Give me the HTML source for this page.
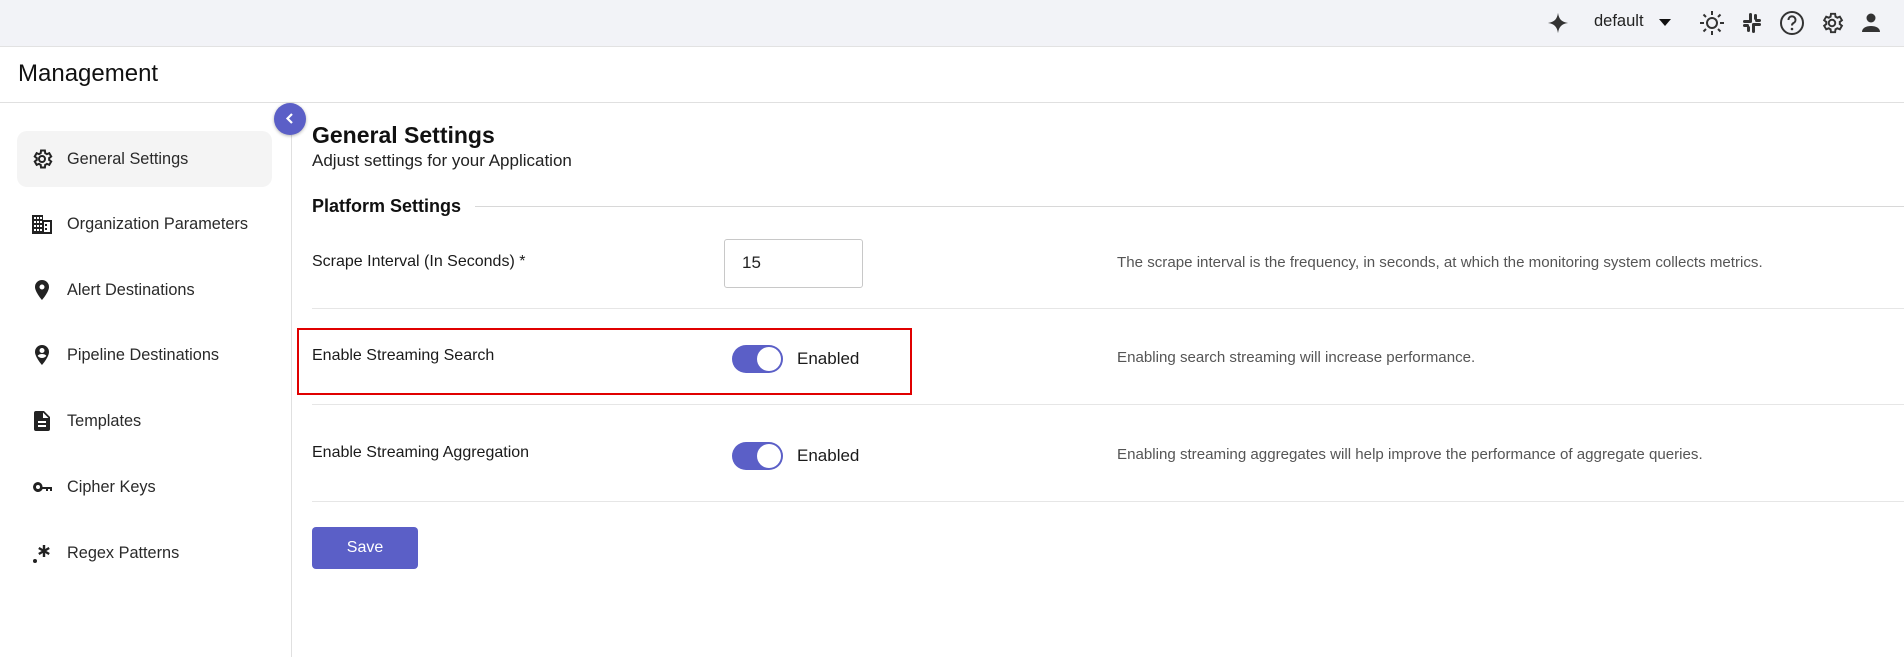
<!DOCTYPE html>
<html><head><meta charset="utf-8"><style>
*{margin:0;padding:0;box-sizing:border-box}
body{width:1904px;height:657px;overflow:hidden;background:#fff;font-family:"Liberation Sans",sans-serif;color:#1a1a1a;position:relative}
.abs{position:absolute;white-space:nowrap}
.top{left:0;top:0;width:1904px;height:47px;background:#f2f3f7;border-bottom:1px solid #e2e2e2}
.hdr{left:0;top:47px;width:1904px;height:56px;border-bottom:1px solid #e0e0e0}
.side{left:291px;top:103px;width:1px;height:554px;background:#e0e0e0}
.item{left:17px;width:255px;height:56px;border-radius:10px;font-size:16.3px;color:#2a2a2a}
.item svg{position:absolute;left:13px;top:16px}
.item span{position:absolute;left:50px;top:19px}
.lbl{font-size:16px;color:#1a1a1a}
.desc{font-size:15.1px;color:#555;left:1117px}
.sep{left:312px;width:1592px;height:1px;background:#e6e6e6}
.tog{width:51px;height:28px;border-radius:14px;background:#5b5fc7}
.tog::after{content:"";position:absolute;right:2px;top:2px;width:24px;height:24px;border-radius:50%;background:#fff}
</style></head><body>
<div class="abs top"></div>
<svg class="abs" style="left:1547px;top:12px" width="22" height="22" viewBox="0 0 24 24"><path d="M12 1 C13 8 16 11 23 12 C16 13 13 16 12 23 C11 16 8 13 1 12 C8 11 11 8 12 1Z" fill="#333"/></svg>
<div class="abs" style="left:1594px;top:12px;font-size:16.5px;color:#222">default</div>
<svg class="abs" style="left:1659px;top:19px" width="12" height="8"><path d="M0 0H12L6 7Z" fill="#111"/></svg>
<svg class="abs" style="left:1699px;top:10px" width="26" height="26" viewBox="0 0 26 26" stroke="#333" stroke-width="2" fill="none"><circle cx="13" cy="13" r="5"/><path d="M13 1v4M13 21v4M1 13h4M21 13h4M4.5 4.5l2.5 2.5M19 19l2.5 2.5M4.5 21.5l2.5-2.5M19 7l2.5-2.5"/></svg>
<svg class="abs" style="left:1740px;top:11px" width="24" height="24" viewBox="0 0 24 24" fill="#333"><rect x="3" y="9" width="9" height="3" rx="1.5"/><rect x="9" y="2" width="3" height="9" rx="1.5"/><rect x="12" y="12" width="9" height="3" rx="1.5"/><rect x="12" y="13" width="3" height="9" rx="1.5"/><rect x="14" y="3" width="3" height="6" rx="1.5"/><rect x="15" y="8" width="6" height="3" rx="1.5"/><rect x="3" y="13" width="6" height="3" rx="1.5"/><rect x="7" y="15" width="3" height="6" rx="1.5"/></svg>
<svg class="abs" style="left:1779px;top:10px" width="26" height="26" viewBox="0 0 26 26"><circle cx="13" cy="13" r="11" stroke="#333" stroke-width="2" fill="none"/><path d="M9.5 10a3.5 3.5 0 1 1 5 3c-1.2.7-1.5 1.3-1.5 2.5" stroke="#333" stroke-width="2" fill="none"/><circle cx="13" cy="19" r="1.3" fill="#333"/></svg>
<svg class="abs" style="left:1819px;top:10px" width="26" height="26" viewBox="0 0 24 24"><path d="M19.14 12.94a7.1 7.1 0 0 0 0-1.88l2.03-1.58-1.92-3.32-2.39.96a7 7 0 0 0-1.62-.94L14.88 3.5h-3.84l-.36 2.68c-.58.24-1.12.56-1.62.94l-2.39-.96-1.92 3.32 2.03 1.58a7.1 7.1 0 0 0 0 1.88l-2.03 1.58 1.92 3.32 2.39-.96c.5.38 1.04.7 1.62.94l.36 2.68h3.840l.36-2.68c.58-.24 1.12-.56 1.62-.94l2.39.96 1.92-3.32z" fill="none" stroke="#333" stroke-width="1.8"/><circle cx="12" cy="12" r="3" fill="none" stroke="#333" stroke-width="1.8"/></svg>
<svg class="abs" style="left:1859px;top:11px" width="24" height="24" viewBox="0 0 24 24" fill="#333"><circle cx="12" cy="7" r="4.5"/><path d="M3 21c0-4 4-6 9-6s9 2 9 6z"/></svg>

<div class="abs hdr"></div>
<div class="abs" style="left:18px;top:60px;font-size:24px;color:#111">Management</div>
<div class="abs side"></div>

<div class="abs item" style="top:131px;background:#f4f4f4"><svg width="24" height="24" viewBox="0 0 24 24"><path d="M19.14 12.94a7.1 7.1 0 0 0 0-1.88l2.03-1.58-1.92-3.32-2.39.96a7 7 0 0 0-1.62-.94L14.88 3.5h-3.84l-.36 2.68c-.58.24-1.12.56-1.62.94l-2.39-.96-1.92 3.32 2.03 1.58a7.1 7.1 0 0 0 0 1.88l-2.03 1.58 1.92 3.32 2.39-.96c.5.38 1.04.7 1.62.94l.36 2.68h3.84l.36-2.68c.58-.24 1.12-.56 1.62-.94l2.39.96 1.92-3.32z" fill="none" stroke="#222" stroke-width="2"/><circle cx="12" cy="12" r="3" fill="none" stroke="#222" stroke-width="2"/></svg><span>General Settings</span></div>
<div class="abs item" style="top:196px"><svg width="24" height="24" viewBox="0 0 24 24" fill="#222"><path d="M2 3h11v5h9v14H2z M4 5v2h2V5zm3 0v2h2V5zm3 0v2h2V5zM4 9v2h2V9zm3 0v2h2V9zm3 0v2h2V9zM4 13v2h2v-2zm3 0v2h2v-2zm3 0v2h2v-2zM4 17v2h2v-2zm3 0v2h2v-2zm3 0v2h2v-2zm4-7v10h6V10zm1 2h2v2h-2zm0 4h2v2h-2z" fill-rule="evenodd"/></svg><span>Organization Parameters</span></div>
<div class="abs item" style="top:262px"><svg width="24" height="24" viewBox="0 0 24 24" fill="#222"><path d="M12 2a7 7 0 0 0-7 7c0 5 7 13 7 13s7-8 7-13a7 7 0 0 0-7-7zm0 9.5a2.5 2.5 0 1 1 0-5 2.5 2.5 0 0 1 0 5z"/></svg><span>Alert Destinations</span></div>
<div class="abs item" style="top:327px"><svg width="24" height="24" viewBox="0 0 24 24" fill="#222"><path d="M12 2a7 7 0 0 0-7 7c0 5 7 13 7 13s7-8 7-13a7 7 0 0 0-7-7zm0 3a2.5 2.5 0 1 1 0 5 2.5 2.5 0 0 1 0-5zm0 10c-1.8 0-3.4-.9-4.3-2.3C8.5 11.6 10.3 11 12 11s3.5.6 4.3 1.7C15.4 14.1 13.8 15 12 15z"/></svg><span>Pipeline Destinations</span></div>
<div class="abs item" style="top:393px"><svg width="24" height="24" viewBox="0 0 24 24" fill="#222"><path d="M6 2h8l6 6v12a2 2 0 0 1-2 2H6a2 2 0 0 1-2-2V4a2 2 0 0 1 2-2zm7 1.5V9h5.5zM8 12v2h8v-2zm0 4v2h8v-2z" fill-rule="evenodd"/></svg><span>Templates</span></div>
<div class="abs item" style="top:459px"><svg width="26" height="24" viewBox="0 0 24 24" fill="#222"><path d="M7 7a5 5 0 1 0 4.6 7H15v2h2v-2h2v2h2v-4h-9.4A5 5 0 0 0 7 7zm0 3a2 2 0 1 1 0 4 2 2 0 0 1 0-4z" fill-rule="evenodd"/></svg><span>Cipher Keys</span></div>
<div class="abs item" style="top:525px"><svg width="24" height="24" viewBox="0 0 24 24" fill="#222"><circle cx="5" cy="20" r="2"/><path d="M14 4v12M8.8 7l10.4 6M8.8 13l10.4-6" stroke="#222" stroke-width="2.4"/></svg><span>Regex Patterns</span></div>

<div class="abs" style="left:274px;top:103px;width:32px;height:32px;border-radius:50%;background:#5b5fc7;box-shadow:0 1px 3px rgba(0,0,0,.3)"><svg style="position:absolute;left:10px;top:9px" width="12" height="13" viewBox="0 0 12 13"><path d="M8 2L3.5 6.5 8 11" stroke="#fff" stroke-width="2.2" fill="none"/></svg></div>

<div class="abs" style="left:312px;top:122px;font-size:23px;font-weight:bold;color:#111">General Settings</div>
<div class="abs" style="left:312px;top:151px;font-size:17px;color:#222">Adjust settings for your Application</div>
<div class="abs" style="left:312px;top:196px;font-size:18px;font-weight:bold;color:#111">Platform Settings</div>
<div class="abs" style="left:475px;top:206px;width:1429px;height:1px;background:#d8d8d8"></div>

<div class="abs lbl" style="left:312px;top:253px">Scrape Interval (In Seconds) *</div>
<div class="abs" style="left:724px;top:239px;width:139px;height:49px;border:1px solid #c8c8c8;border-radius:3px;font-size:17px;padding:13px 0 0 17px;color:#222">15</div>
<div class="abs desc" style="top:254px">The scrape interval is the frequency, in seconds, at which the monitoring system collects metrics.</div>
<div class="abs sep" style="top:308px"></div>

<div class="abs" style="left:297px;top:328px;width:615px;height:67px;border:2px solid #e00000"></div>
<div class="abs lbl" style="left:312px;top:347px">Enable Streaming Search</div>
<div class="abs tog" style="left:732px;top:345px"></div>
<div class="abs lbl" style="left:797px;top:349px;font-size:17px">Enabled</div>
<div class="abs desc" style="top:349px">Enabling search streaming will increase performance.</div>
<div class="abs sep" style="top:404px"></div>

<div class="abs lbl" style="left:312px;top:444px">Enable Streaming Aggregation</div>
<div class="abs tog" style="left:732px;top:442px"></div>
<div class="abs lbl" style="left:797px;top:446px;font-size:17px">Enabled</div>
<div class="abs desc" style="top:446px">Enabling streaming aggregates will help improve the performance of aggregate queries.</div>
<div class="abs sep" style="top:501px"></div>

<div class="abs" style="left:312px;top:527px;width:106px;height:42px;background:#5b5fc7;border-radius:4px;color:#fff;font-size:16px;text-align:center;line-height:42px">Save</div>
</body></html>
